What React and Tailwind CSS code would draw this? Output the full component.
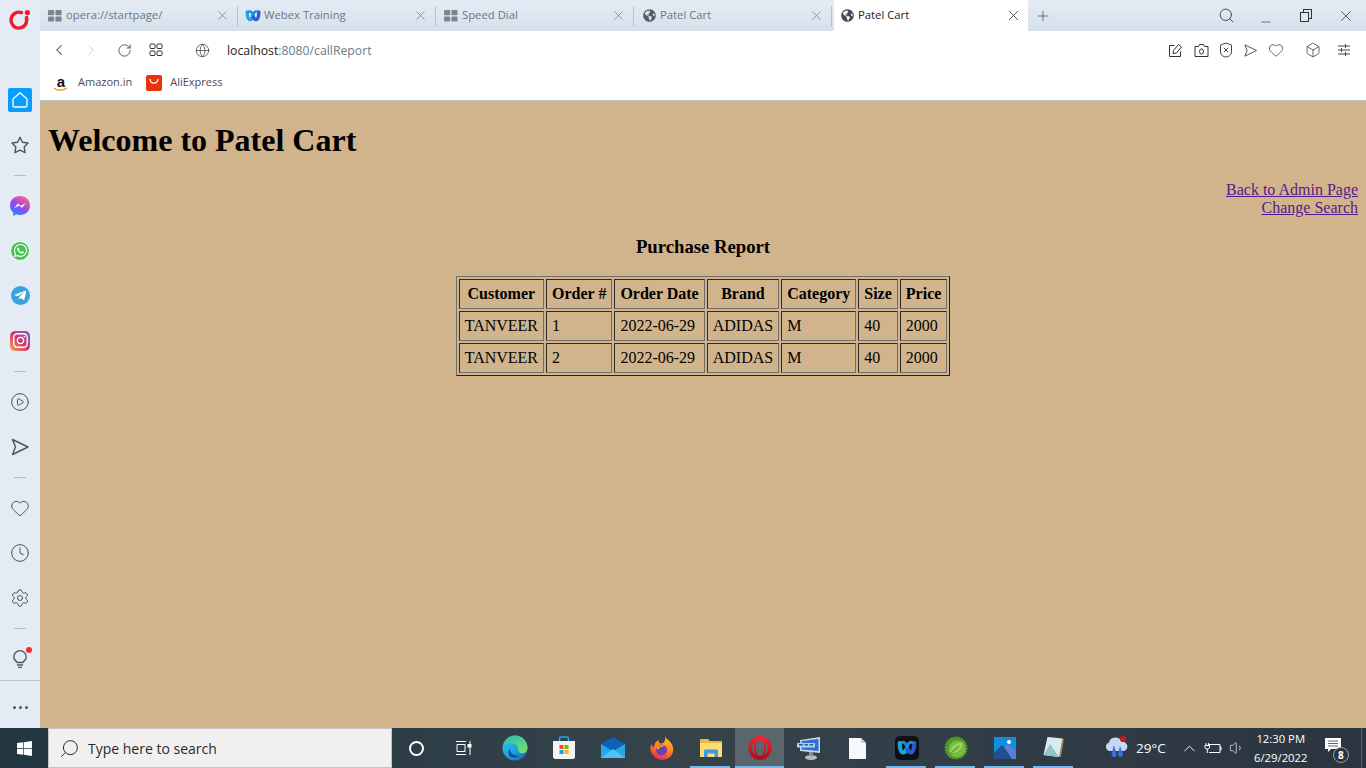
import React from 'react';
import { X, Plus, Search, Minus, ChevronLeft, ChevronRight, RotateCw, Globe, Box, Heart, Clock, Settings, CirclePlay, ChevronUp, Volume1 } from 'lucide-react';
import { FaGlobeAmericas, FaWhatsapp, FaTelegramPlane, FaInstagram, FaWindows } from 'react-icons/fa';

const uiFont = "font-['Open_Sans','Noto_Sans',sans-serif]";

const SendIcon = ({ size = 20, sw = 1.4, color = '#4a5560' }) => (
  <svg width={size} height={size} viewBox="0 0 20 20" fill="none" stroke={color} strokeWidth={sw} strokeLinejoin="round">
    <path d="M2.5 2.5 L18 10 L2.5 17.5 L5.5 10 Z" />
  </svg>
);

const GridIcon = () => (
  <svg width="14" height="14" viewBox="0 0 14 14" fill="none" stroke="#333" strokeWidth="1">
    <rect x="1" y="1" width="5" height="4.5" rx="1" />
    <rect x="8" y="1" width="5" height="4.5" rx="1" />
    <rect x="1" y="8" width="5" height="4.5" rx="1" />
    <rect x="8" y="8" width="5" height="4.5" rx="1" />
  </svg>
);

const TabGrid = () => (
  <svg width="14" height="12" viewBox="0 0 14 12" fill="#7d858c">
    <rect x="0" y="0" width="6.2" height="5.2" rx="1" />
    <rect x="7.4" y="0" width="6.2" height="5.2" rx="1" />
    <rect x="0" y="6.4" width="6.2" height="5.2" rx="1" />
    <rect x="7.4" y="6.4" width="6.2" height="5.2" rx="1" />
  </svg>
);

const WebexIcon = ({ size = 16 }) => (
  <svg width={size} height={size} viewBox="0 0 16 16" fill="none" strokeWidth="3.4" strokeLinecap="round" className="shrink-0">
    <path d="M2.2 4 C2.2 13 6.2 13.5 8 8" stroke="#19a8d6" />
    <path d="M13.8 4 C13.8 13 9.8 13.5 8 8" stroke="#2c58d6" />
    <path d="M4 3.6 C6 2.6 7.5 5 8 8 C8.5 5 10 2.6 12 3.6" stroke="#1c8ae0" strokeWidth="2.4" />
  </svg>
);

const OperaLogo = () => (
  <svg width="22" height="22" viewBox="0 0 22 22" fill="none">
    <path d="M12.5 3.6 A7.8 8 0 1 0 17.6 10" stroke="#ee1c2e" strokeWidth="3.4" strokeLinecap="round" />
    <path d="M17.6 8.5 V11" stroke="#ee1c2e" strokeWidth="3.4" strokeLinecap="round" />
    <circle cx="18.4" cy="3.6" r="2.6" fill="#ee1c2e" />
  </svg>
);

const ShieldX = () => (
  <svg width="14" height="16" viewBox="0 0 14 16" fill="none" stroke="#444" strokeWidth="1">
    <path d="M7 1 L12.5 3 V10 C12.5 13 9.5 15 7 15 C4.5 15 1.5 13 1.5 10 V3 Z" />
    <path d="M4.8 5.8 L9.2 10.2 M9.2 5.8 L4.8 10.2" />
  </svg>
);

const EditIcon = () => (
  <svg width="15" height="15" viewBox="0 0 15 15" fill="none" stroke="#333" strokeWidth="1">
    <path d="M6.5 2.5 H1.5 V13.5 H12.5 V8.5" />
    <path d="M5 10.5 L5.5 7.5 L10.5 1.5 L13.5 4 L8.5 10 Z" />
  </svg>
);

const CameraIcon = () => (
  <svg width="15" height="15" viewBox="0 0 15 15" fill="none" stroke="#333" strokeWidth="1">
    <path d="M1 3.5 H4.5 L5.5 1.5 H9.5 L10.5 3.5 H14 V13.5 H1 Z" />
    <ellipse cx="7.5" cy="8.5" rx="2" ry="2.6" />
  </svg>
);

const SlidersIcon = () => (
  <svg width="14" height="14" viewBox="0 0 14 14" fill="none" stroke="#444" strokeWidth="1">
    <path d="M1 3 H13 M1 7 H13 M1 11 H13 M8.5 1 V5 M4.5 5 V9 M8.5 9 V13" />
  </svg>
);

const HomeIcon = () => (
  <svg width="18" height="18" viewBox="0 0 18 18" fill="none" stroke="#fff" strokeWidth="1.3" strokeLinejoin="round">
    <path d="M2 8 L9 1.8 L16 8 V14.5 Q16 16 14.5 16 H3.5 Q2 16 2 14.5 Z" />
  </svg>
);

const StarIcon = () => (
  <svg width="18" height="18" viewBox="0 0 18 18" fill="none" stroke="#4a5560" strokeWidth="1.4" strokeLinejoin="round">
    <path d="M9 1.2 L11.4 6.2 L17 7 L13.2 11 L14 16.6 L9 14.2 L4 16.6 L4.8 11 L1 7 L6.6 6.2 Z" />
  </svg>
);

const MessengerIcon = () => (
  <svg width="20" height="20" viewBox="0 0 20 20">
    <defs>
      <linearGradient id="mg" x1="0.2" y1="1" x2="0.8" y2="0">
        <stop offset="0" stopColor="#1b8cff" />
        <stop offset="0.5" stopColor="#9a45f0" />
        <stop offset="1" stopColor="#ff6a6a" />
      </linearGradient>
    </defs>
    <path d="M10 0 C4.4 0 0 4.1 0 9.5 C0 12.4 1.2 14.8 3.2 16.5 V20 L6.4 18.3 C7.5 18.7 8.7 19 10 19 C15.6 19 20 14.9 20 9.5 C20 4.1 15.6 0 10 0 Z" fill="url(#mg)" />
    <path d="M4 12.2 L8 7.6 L10.8 9.8 L16 7 L12 11.7 L9.2 9.5 Z" fill="#fff" />
  </svg>
);

const BulbIcon = () => (
  <svg width="18" height="22" viewBox="0 0 18 22" fill="none" stroke="#4a5560" strokeWidth="1.3" strokeLinecap="round">
    <path d="M6 14 C3.8 12.8 2.8 10.8 2.8 8.8 A6.2 6.2 0 0 1 15.2 8.8 C15.2 10.8 14.2 12.8 12 14" />
    <path d="M6 14.5 H12 M6.5 17 H11.5 M7.5 19.3 H10.5" />
  </svg>
);

const EdgeIcon = () => (
  <svg width="26" height="26" viewBox="0 0 26 26">
    <defs>
      <linearGradient id="eg" x1="0" y1="0" x2="1" y2="1">
        <stop offset="0" stopColor="#35c1f1" />
        <stop offset="0.6" stopColor="#1b9de2" />
        <stop offset="1" stopColor="#0c59a4" />
      </linearGradient>
      <linearGradient id="eg2" x1="0.5" y1="0" x2="1" y2="1">
        <stop offset="0" stopColor="#34c6a0" />
        <stop offset="1" stopColor="#7fe05f" />
      </linearGradient>
    </defs>
    <circle cx="13" cy="13" r="12.5" fill="url(#eg)" />
    <path d="M13 .5 C20 .5 25.5 6 25.5 13 C25.5 17 22 19 18.5 18 C15 17 17 12 14.5 10 C11 7.5 5 8 2 10 C3 5 7 .5 13 .5 Z" fill="url(#eg2)" />
    <path d="M8 14 C8 19 13 21 17 21 C14 23 9 24 7 20 C6 18 6.5 15.5 8 14 Z" fill="#0b4f92" />
  </svg>
);

const StoreIcon = () => (
  <svg width="24" height="24" viewBox="0 0 24 24">
    <path d="M7.5 6 V2.5 Q7.5 1 9 1 H15 Q16.5 1 16.5 2.5 V6" fill="none" stroke="#29a6e8" strokeWidth="1.6" />
    <path d="M1 5 H23 V20.5 Q23 23 20.5 23 H3.5 Q1 23 1 20.5 Z" fill="#f3f3f3" />
    <rect x="7.5" y="9" width="4" height="4" fill="#f25022" />
    <rect x="12.5" y="9" width="4" height="4" fill="#7fba00" />
    <rect x="7.5" y="14" width="4" height="4" fill="#00a4ef" />
    <rect x="12.5" y="14" width="4" height="4" fill="#ffb900" />
  </svg>
);

const MailIcon = () => (
  <svg width="24" height="24" viewBox="0 0 24 24">
    <path d="M0 8 L12 1 L24 8 L12 15 Z" fill="#0b62b8" />
    <path d="M0 8 L12 15 L24 8 V22 H0 Z" fill="#28a8ea" />
    <path d="M0 22 L12 13 L24 22 Z" fill="#50c4f4" />
  </svg>
);

const FirefoxIcon = () => (
  <svg width="24" height="24" viewBox="0 0 24 24">
    <defs>
      <linearGradient id="ff" x1="0.7" y1="0" x2="0.3" y2="1">
        <stop offset="0" stopColor="#ffc61c" />
        <stop offset="0.55" stopColor="#ff7a1a" />
        <stop offset="1" stopColor="#f0245a" />
      </linearGradient>
    </defs>
    <path d="M15 0 C16 3 19 4 21 7 C24 11 24 16 21 20 C18 24 11 25 6 22 C1 19 -1 13 1.5 8 C2 10 3 11 4 11.5 C4 8 6 5 9 4 C8 6 9 7 11 7.5 C14 8 16 4 15 0 Z" fill="url(#ff)" />
    <circle cx="11.5" cy="14" r="5.5" fill="#6b3fb8" />
    <path d="M6 12 C8 9 13 8 16 10 C13 10 9 11 8 14 Z" fill="#ff9a1f" />
  </svg>
);

const FolderIcon = () => (
  <svg width="22" height="22" viewBox="0 0 22 22">
    <path d="M0 2 H8 L10 4 H22 V20 H0 Z" fill="#e8b93a" />
    <path d="M0 6 H22 V20 H0 Z" fill="#fbdc77" />
    <path d="M4 20 V14 Q4 12.5 5.5 12.5 H16.5 Q18 12.5 18 14 V20 H14.5 V16.5 H7.5 V20 Z" fill="#3d9be0" />
  </svg>
);

const OperaTask = () => (
  <svg width="24" height="24" viewBox="0 0 24 24" fill="none">
    <defs>
      <linearGradient id="og" x1="0" y1="0" x2="0" y2="1">
        <stop offset="0" stopColor="#ff1b2d" />
        <stop offset="1" stopColor="#b50d1e" />
      </linearGradient>
    </defs>
    <ellipse cx="12" cy="12" rx="9.8" ry="10.3" stroke="url(#og)" strokeWidth="3.4" />
    <ellipse cx="12" cy="12" rx="5" ry="9" stroke="url(#og)" strokeWidth="1.8" />
  </svg>
);

const MonitorIcon = () => (
  <svg width="24" height="24" viewBox="0 0 24 24">
    <path d="M3 4 L23 1 V17 L3 15 Z" fill="#c9d7e8" />
    <path d="M4.5 5 L21.5 3 V15 L4.5 13.5 Z" fill="#2f6fd0" />
    <rect x="0" y="7" width="18" height="4.5" fill="#a5d4f2" />
    <path d="M2 8.8 H6 M7.5 8.8 H11 M12.5 8.8 H16" stroke="#2a5aa5" strokeWidth="1.4" />
    <ellipse cx="14" cy="21.5" rx="6" ry="2.5" fill="#b8bcc0" />
    <rect x="12" y="16" width="4" height="4" fill="#8b9096" />
  </svg>
);

const FileIcon = () => (
  <svg width="17" height="21" viewBox="0 0 17 21">
    <path d="M0 0 H12 L17 5 V21 H0 Z" fill="#f7f9fb" />
    <path d="M12 0 L17 5 H12 Z" fill="#c8ced4" />
  </svg>
);

const SpringIcon = () => (
  <svg width="24" height="24" viewBox="0 0 24 24">
    <circle cx="12" cy="12" r="10.8" fill="#4f9a2a" stroke="#4f9a2a" strokeWidth="1.6" strokeDasharray="1.6 1.2" />
    <circle cx="13" cy="13" r="8.5" fill="#79b93f" />
    <path d="M6 17 C6 10 12 6 19 6 C19 13 14 18 6 17 Z" fill="#9ad05a" />
    <path d="M6 18 L15 10" stroke="#5d9a2d" strokeWidth="1.2" />
  </svg>
);

const PhotosIcon = () => (
  <svg width="22" height="22" viewBox="0 0 22 22">
    <rect width="22" height="22" fill="#0d8fe0" />
    <circle cx="15" cy="5" r="2" fill="#fff" />
    <path d="M0 16 L8 8 L22 22 H0 Z" fill="#234f8c" />
    <path d="M10 10 L14 7 L22 14 V22 H18 Z" fill="#5b7fd8" />
  </svg>
);

const NotepadIcon = () => (
  <svg width="24" height="24" viewBox="0 0 24 24">
    <path d="M6 1 L22 3 L19 21 L2 19 Z" fill="#a27d47" />
    <path d="M5.5 1 L20.5 2.5 L17 21 L1.5 19 Z" fill="#d6ecf0" />
    <path d="M2 19 L8 8 L17 21 Z" fill="#8fc4cc" />
  </svg>
);

const WeatherIcon = () => (
  <svg width="26" height="26" viewBox="0 0 26 26">
    <path d="M6 16 A4.5 4.5 0 0 1 6 7.5 A6.5 6.5 0 0 1 18.5 7 A4.5 4.5 0 0 1 21 16 Z" fill="#c9d7f2" />
    <path d="M11 10 L8.5 19 Q8.5 22 11 22 Q13.5 22 13.5 19 Z" fill="#3a6fe0" />
    <path d="M17 11 L15 19 Q15 22 17.5 22 Q20 22 20 19 Z" fill="#3a6fe0" />
    <circle cx="20" cy="4" r="3" fill="#c81e1e" />
  </svg>
);

const BatteryIcon = () => (
  <svg width="18" height="13" viewBox="0 0 17 13" fill="none" stroke="#fff" strokeWidth="1">
    <path d="M4.5 2.5 H15.5 V10.5 H4.5 M15.5 5 H16.5 V8 H15.5" />
    <path d="M1.5 1 V3 M4 1 V3 M0.5 3.5 H5 V5.5 Q5 7 2.8 7 Q0.5 7 0.5 5.5 Z M2.8 7 V11" />
  </svg>
);

const tabs = [
  { title: 'opera://startpage/', icon: <TabGrid /> },
  { title: 'Webex Training', icon: <WebexIcon /> },
  { title: 'Speed Dial', icon: <TabGrid /> },
  { title: 'Patel Cart', icon: <FaGlobeAmericas size={13} color="#555e66" /> },
];

const Tab = ({ title, icon }) => (
  <div className="w-[198px] h-full flex items-center pl-[6px] pr-[2px]">
    <span className="w-[14px] flex justify-center">{icon}</span>
    <span className="ml-1 flex-1 text-[11.3px] text-[#6c7783] whitespace-nowrap">{title}</span>
    <X size={15} strokeWidth={1} color="#666" />
    <span className="w-px h-5 bg-[#b8c2cc] ml-[7px]" />
  </div>
);

const SideItem = ({ children, short }) => (
  <div className={`${short ? 'h-11 pt-[2px]' : 'h-[45px]'} shrink-0 flex items-center justify-center`}>{children}</div>
);
const SideDivider = () => (
  <div className="h-4 shrink-0 flex items-center justify-center">
    <span className="w-3 h-px bg-[#b4bdc6]" />
  </div>
);

const Sidebar = () => (
  <div className="w-10 shrink-0 bg-[#e4ebf4] flex flex-col relative">
    <div className="h-[77px] shrink-0 pt-[9px] flex justify-center items-start">
      <OperaLogo />
    </div>
    <SideItem>
      <div className="w-6 h-6 rounded-[2px] bg-[#0a9dfb] flex items-center justify-center">
        <HomeIcon />
      </div>
    </SideItem>
    <SideItem><StarIcon /></SideItem>
    <SideDivider />
    <SideItem><MessengerIcon /></SideItem>
    <SideItem>
      <div className="w-5 h-5 rounded-full bg-[#45c554] border border-white flex items-center justify-center">
        <FaWhatsapp size={15} color="#fff" />
      </div>
    </SideItem>
    <SideItem>
      <div className="w-[19px] h-[19px] rounded-full bg-[#3aa2dc] flex items-center justify-center">
        <FaTelegramPlane size={13} color="#fff" />
      </div>
    </SideItem>
    <SideItem>
      <div className="w-5 h-5 rounded-[5px] bg-gradient-to-tr from-[#f9a03f] via-[#d6336c] to-[#6a4fc9] flex items-center justify-center">
        <FaInstagram size={17} color="#fff" />
      </div>
    </SideItem>
    <SideDivider />
    <SideItem><CirclePlay size={20} strokeWidth={1.2} color="#4a5560" /></SideItem>
    <SideItem><SendIcon /></SideItem>
    <SideDivider />
    <SideItem><Heart size={20} strokeWidth={1.2} color="#4a5560" /></SideItem>
    <SideItem><Clock size={20} strokeWidth={1.2} color="#4a5560" /></SideItem>
    <SideItem><Settings size={20} strokeWidth={1.2} color="#4a5560" /></SideItem>
    <SideDivider />
    <SideItem short>
      <div className="relative">
        <BulbIcon />
        <span className="absolute -top-px right-[-3px] w-[6px] h-[6px] rounded-full bg-[#f52b2b]" />
      </div>
    </SideItem>
    <div className="flex-1 border-t border-[#b9c2ca] flex items-center justify-center gap-[3px] pt-[6px]">
      <span className="w-[3px] h-[3px] rounded-full bg-[#4a5560]" />
      <span className="w-[3px] h-[3px] rounded-full bg-[#4a5560]" />
      <span className="w-[3px] h-[3px] rounded-full bg-[#4a5560]" />
    </div>
  </div>
);

const TabBar = () => (
  <div className="h-[31px] shrink-0 flex items-center pl-[2px] bg-gradient-to-b from-[#e5ecf5] to-[#d6e0ea]">
    {tabs.map((t) => <Tab key={t.title} {...t} />)}
    <div className="w-[194px] h-full bg-white rounded-t-[3px] flex items-center pl-[6px] pr-[6px]">
      <span className="w-[14px] flex justify-center"><FaGlobeAmericas size={13} color="#444c53" /></span>
      <span className="ml-1 flex-1 text-[11.3px] text-[#222] whitespace-nowrap">Patel Cart</span>
      <X size={17} strokeWidth={1.2} color="#333" />
    </div>
    <div className="ml-[7px] w-[16px] flex justify-center">
      <Plus size={16} strokeWidth={1} color="#333" />
    </div>
    <div className="flex-1 flex items-center justify-end pr-[11px]">
      <Search size={17} strokeWidth={1.2} color="#333" />
      <span className="ml-[24px]"><Minus size={14} strokeWidth={1.1} color="#333" className="translate-y-[6px]" /></span>
      <span className="ml-[27px] relative w-[13px] h-[13px]">
        <span className="absolute left-[3px] top-0 w-[9px] h-[10px] border border-[#333]" />
        <span className="absolute left-0 top-[3px] w-[9px] h-[10px] border border-[#333] bg-[#dfe7f0]" />
      </span>
      <span className="ml-[24px]"><X size={18} strokeWidth={1} color="#333" /></span>
    </div>
  </div>
);

const Toolbar = () => (
  <div className="h-[70px] shrink-0 bg-white border-b border-[#b4c2ce] flex flex-col">
    <div className="h-[38px] flex items-center pl-[10px] pr-[15px]">
      <ChevronLeft size={18} strokeWidth={1.4} color="#444" />
      <span className="ml-[14px]"><ChevronRight size={18} strokeWidth={1.2} color="#c4c8cc" /></span>
      <span className="ml-[17px]"><RotateCw size={15} strokeWidth={1.4} color="#444" /></span>
      <span className="ml-[17px]"><GridIcon /></span>
      <span className="ml-[32px]"><Globe size={15} strokeWidth={1.1} color="#333" /></span>
      <span className="ml-[17px] text-[12.25px] text-[#222] whitespace-nowrap translate-y-px">
        localhost<span className="text-[#6e7b88]">:8080/callReport</span>
      </span>
      <div className="flex-1 flex items-center justify-end">
        <EditIcon />
        <span className="ml-[11px]"><CameraIcon /></span>
        <span className="ml-[10px]"><ShieldX /></span>
        <span className="ml-[10px]"><SendIcon size={15} sw={1.1} color="#333" /></span>
        <span className="ml-[10px]"><Heart size={16} strokeWidth={1.1} color="#333" /></span>
        <span className="ml-[21px]"><Box size={16} strokeWidth={1.1} color="#333" /></span>
        <span className="ml-[16px]"><SlidersIcon /></span>
      </div>
    </div>
    <div className="h-[26px] pt-px flex items-center pl-[15px]">
      <span className="relative w-3 h-[18px] flex justify-center font-['Liberation_Sans',sans-serif] font-bold text-[15px] leading-[16px] text-[#111]">
        a
        <svg className="absolute left-[-2px] bottom-0" width="15" height="5" viewBox="0 0 15 5" fill="none">
          <path d="M1 1 C4 4 10 4 14 1" stroke="#f19a1f" strokeWidth="1.4" />
        </svg>
      </span>
      <span className="ml-[11px] text-[11px] text-[#4c4c58] whitespace-nowrap">Amazon.in</span>
      <span className="ml-[14px] w-4 h-4 rounded-[2px] bg-[#e8330c] flex items-start justify-center pt-[3px]">
        <svg width="10" height="6" viewBox="0 0 10 6" fill="none">
          <path d="M1 1 C1.5 6.5 8.5 6.5 9 1" stroke="#fff" strokeWidth="1.3" />
        </svg>
      </span>
      <span className="ml-2 text-[11px] text-[#4c4c58] whitespace-nowrap">AliExpress</span>
    </div>
  </div>
);

const rows = [
  ['TANVEER', '1', '2022-06-29', 'ADIDAS', 'M', '40', '2000'],
  ['TANVEER', '2', '2022-06-29', 'ADIDAS', 'M', '40', '2000'],
];
const headers = ['Customer', 'Order #', 'Order Date', 'Brand', 'Category', 'Size', 'Price'];
const cellBorder = 'border border-t-[#2b2b2b] border-l-[#2b2b2b] border-b-[#6f6f6f] border-r-[#6f6f6f] p-[5px]';

const Page = () => (
  <div className="flex-1 bg-[#d2b48c] px-2 text-black font-['Liberation_Serif',serif]">
    <h1 className="text-[32px] leading-[37px] font-bold pt-[21px] pb-[22px]">Welcome to Patel Cart</h1>
    <div className="text-right text-base leading-[18px] text-[#551a8b] underline">
      <div>Back to Admin Page</div>
      <div>Change Search</div>
    </div>
    <h3 className="text-center text-[18.72px] leading-[21px] font-bold pt-[19px] pb-[19px]">Purchase Report</h3>
    <table className="mx-auto border-separate border-spacing-[2px] border border-t-[#6f6f6f] border-l-[#6f6f6f] border-b-[#222] border-r-[#222] text-base leading-[18px]">
      <thead>
        <tr>
          {headers.map((h) => <th key={h} className={`${cellBorder} font-bold text-center`}>{h}</th>)}
        </tr>
      </thead>
      <tbody>
        {rows.map((r) => (
          <tr key={r[1]}>
            {r.map((c, i) => <td key={i} className={`${cellBorder} text-left`}>{c}</td>)}
          </tr>
        ))}
      </tbody>
    </table>
  </div>
);

const apps = [
  { icon: <EdgeIcon />, bar: '' },
  { icon: <StoreIcon />, bar: '' },
  { icon: <MailIcon />, bar: '' },
  { icon: <FirefoxIcon />, bar: '' },
  { icon: <FolderIcon />, bar: 'open' },
  { icon: <OperaTask />, bar: 'active' },
  { icon: <MonitorIcon />, bar: '' },
  { icon: <FileIcon />, bar: '' },
  { icon: <div className="w-6 h-6 rounded-[5px] bg-[#0d1114] flex items-center justify-center"><WebexIcon size={20} /></div>, bar: 'open' },
  { icon: <SpringIcon />, bar: 'open' },
  { icon: <PhotosIcon />, bar: 'open' },
  { icon: <NotepadIcon />, bar: 'open' },
];

const TaskApp = ({ icon, bar }) => (
  <div className={`relative w-[49px] h-full flex items-center justify-center ${bar === 'active' ? 'bg-[#5a666d]' : ''}`}>
    {icon}
    {bar === 'open' && <span className="absolute bottom-0 left-1 right-[5px] h-[2px] bg-[#76b9ed]" />}
    {bar === 'active' && <span className="absolute bottom-0 left-0 right-0 h-[2px] bg-[#76b9ed]" />}
  </div>
);

const Taskbar = () => (
  <div className="h-10 shrink-0 flex items-center bg-gradient-to-r from-[#21363f] via-[#36434b] to-[#2b3540] text-white">
    <div className="w-12 h-full flex items-center justify-center">
      <FaWindows size={17} color="#fff" />
    </div>
    <div className="w-[344px] h-full bg-[#f0f0f0] border border-[#c4c4c4] flex items-center pl-[10px] gap-[8px]">
      <Search size={21} strokeWidth={1.1} color="#222" className="-scale-x-100" />
      <span className="text-sm text-[#2a2a2a] whitespace-nowrap translate-y-px">Type here to search</span>
    </div>
    <div className="w-12 h-full flex items-center justify-center">
      <span className="w-[15px] h-[15px] rounded-full border-2 border-white" />
    </div>
    <div className="w-[46px] mr-1 h-full flex items-center justify-center">
      <svg width="17" height="16" viewBox="0 0 17 16" fill="none" stroke="#fff" strokeWidth="1">
        <path d="M1 1.5 H11 M1 14.5 H11 M2 4.5 H10 V11.5 H2 Z M15 1 V5 M15 7 V15" />
        <rect x="13" y="4.5" width="3" height="2.5" fill="#fff" />
      </svg>
    </div>
    {apps.map((a, i) => <TaskApp key={i} {...a} />)}
    <div className="ml-[25px] flex items-center gap-[7px]">
      <WeatherIcon />
      <span className="text-[13.5px] whitespace-nowrap">29°C</span>
    </div>
    <div className="ml-[14px]"><ChevronUp size={19} strokeWidth={1.2} color="#fff" /></div>
    <div className="ml-[5px]"><BatteryIcon /></div>
    <div className="ml-[7px]"><Volume1 size={16} strokeWidth={1} color="#fff" /></div>
    <div className="ml-[4px] w-[64px] text-center text-[11.3px] leading-[19px] whitespace-nowrap">
      <div>12:30 PM</div>
      <div>6/29/2022</div>
    </div>
    <div className="relative ml-[9px] w-6 h-full flex items-center justify-center">
      <svg width="17" height="16" viewBox="0 0 17 16" fill="#fff" className="-translate-y-[2px]">
        <path d="M0 0 H16 V11 H6 L3 14 V11 H0 Z" />
        <path d="M3 3 H13 M3 5.5 H13 M3 8 H13" stroke="#36434b" strokeWidth="0.8" />
      </svg>
      <span className="absolute right-[-3px] bottom-[5px] w-4 h-4 rounded-full bg-[#2b3540] border border-[#9aa0a6] text-[10px] font-bold leading-[14px] text-center">8</span>
    </div>
    <div className="ml-auto mr-1 w-px h-full bg-[#59636b]" />
  </div>
);

export default function App() {
  return (
    <div className={`w-[1366px] h-[768px] overflow-hidden flex flex-col ${uiFont}`}>
      <div className="flex-1 min-h-0 flex">
        <Sidebar />
        <div className="flex-1 min-w-0 flex flex-col">
          <TabBar />
          <Toolbar />
          <Page />
        </div>
      </div>
      <Taskbar />
    </div>
  );
}
